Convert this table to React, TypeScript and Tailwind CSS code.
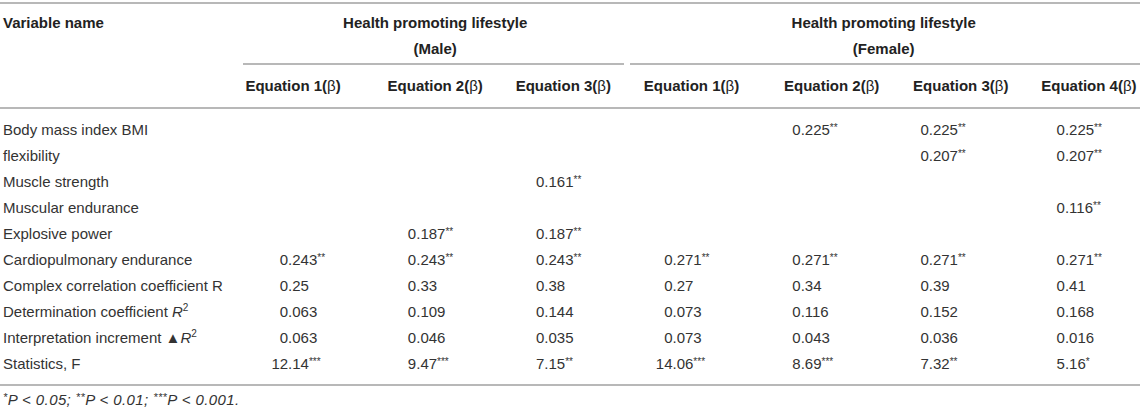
import { ReactNode } from 'react';

type Row = {
  label: ReactNode;
  values: string[];
};

const R2 = (
  <>
    <i>R</i>
    <sup className="text-[10px] -top-[6px]">2</sup>
  </>
);

const rows: Row[] = [
  { label: 'Body mass index BMI', values: ['', '', '', '', '0.225**', '0.225**', '0.225**'] },
  { label: 'flexibility', values: ['', '', '', '', '', '0.207**', '0.207**'] },
  { label: 'Muscle strength', values: ['', '', '0.161**', '', '', '', ''] },
  { label: 'Muscular endurance', values: ['', '', '', '', '', '', '0.116**'] },
  { label: 'Explosive power', values: ['', '0.187**', '0.187**', '', '', '', ''] },
  {
    label: 'Cardiopulmonary endurance',
    values: ['0.243**', '0.243**', '0.243**', '0.271**', '0.271**', '0.271**', '0.271**'],
  },
  {
    label: 'Complex correlation coefficient R',
    values: ['0.25', '0.33', '0.38', '0.27', '0.34', '0.39', '0.41'],
  },
  {
    label: <>Determination coefficient {R2}</>,
    values: ['0.063', '0.109', '0.144', '0.073', '0.116', '0.152', '0.168'],
  },
  {
    label: <>Interpretation increment ▲{R2}</>,
    values: ['0.063', '0.046', '0.035', '0.073', '0.043', '0.036', '0.016'],
  },
  {
    label: 'Statistics, F',
    values: ['12.14***', '9.47***', '7.15**', '14.06***', '8.69***', '7.32**', '5.16*'],
  },
];

// header label + small nudge so each sits where the original puts it
const equations = [
  { name: 'Equation 1', cls: 'pr-[28px]' },
  { name: 'Equation 2', cls: '' },
  { name: 'Equation 3', cls: '' },
  { name: 'Equation 1', cls: '' },
  { name: 'Equation 2', cls: 'pl-[24px]' },
  { name: 'Equation 3', cls: 'pl-[26px]' },
  { name: 'Equation 4', cls: 'pl-[26px]' },
];

const valueNudge = ['', '', '', '', '', '', 'pl-[16px]'];

function Value({ value, className = '' }: { value: string; className?: string }) {
  if (!value) return <div />;
  const stars = value.replace(/[^*]/g, '');
  const num = value.replace(/\*/g, '');
  const [int, frac] = num.split('.');

  return (
    <div className={`flex justify-center ${className}`}>
      <div className="flex w-[72px]">
        <span className="w-[17px] text-right">{int}</span>
        <span>
          .{frac}
          {stars && <sup className="text-[10px] -top-[4px]">{stars}</sup>}
        </span>
      </div>
    </div>
  );
}

function Line({ className = '' }: { className?: string }) {
  return <div className={`h-[2px] bg-[#b8b8b8] ${className}`} />;
}

export default function App() {
  return (
    <div className="w-[1143px] h-[415px] overflow-hidden bg-white font-['Liberation_Sans',Arial,sans-serif] text-[15px] text-[#333]">
      <div className="w-[1140px] pt-[2px]">
        <Line />

        {/* header */}
        <div className="grid grid-cols-[243px_repeat(7,minmax(0,1fr))] font-bold text-[#222]">
          <div className="h-[38px] flex items-center pl-[3px]">Variable name</div>
          <div className="col-span-3 h-[38px] flex items-center justify-center">
            Health promoting lifestyle
          </div>
          <div className="col-span-4 h-[38px] flex items-center justify-center">
            Health promoting lifestyle
          </div>

          <div />
          <div className="col-span-3 h-[14px] flex items-center justify-center">(Male)</div>
          <div className="col-span-4 h-[14px] flex items-center justify-center">(Female)</div>

          <div />
          <div className="col-span-3 pt-[7px]">
            <Line className="mr-[3px]" />
          </div>
          <div className="col-span-4 pt-[7px]">
            <Line className="ml-[3px]" />
          </div>

          <div />
          {equations.map((eq, i) => (
            <div key={i} className={`h-[42px] flex items-center justify-center whitespace-nowrap ${eq.cls}`}>
              {eq.name}(<span className="font-normal">β</span>)
            </div>
          ))}
        </div>

        <Line />

        {/* body */}
        <div className="pt-[8px]">
          {rows.map((row, i) => (
            <div key={i} className="grid grid-cols-[243px_repeat(7,minmax(0,1fr))] h-[26px] items-center">
              <div className="pl-[3px] whitespace-nowrap">{row.label}</div>
              {row.values.map((v, j) => (
                <Value key={j} value={v} className={valueNudge[j]} />
              ))}
            </div>
          ))}
        </div>

        <Line className="mt-[7px]" />

        <div className="mt-[6px] pl-[3px] text-[15px] leading-[16px] italic tracking-[0.4px]">
          <sup className="text-[11px] -top-[4px]">*</sup>P &lt; 0.05;{' '}
          <sup className="text-[11px] -top-[4px]">**</sup>P &lt; 0.01;{' '}
          <sup className="text-[11px] -top-[4px]">***</sup>P &lt; 0.001.
        </div>
      </div>
    </div>
  );
}
